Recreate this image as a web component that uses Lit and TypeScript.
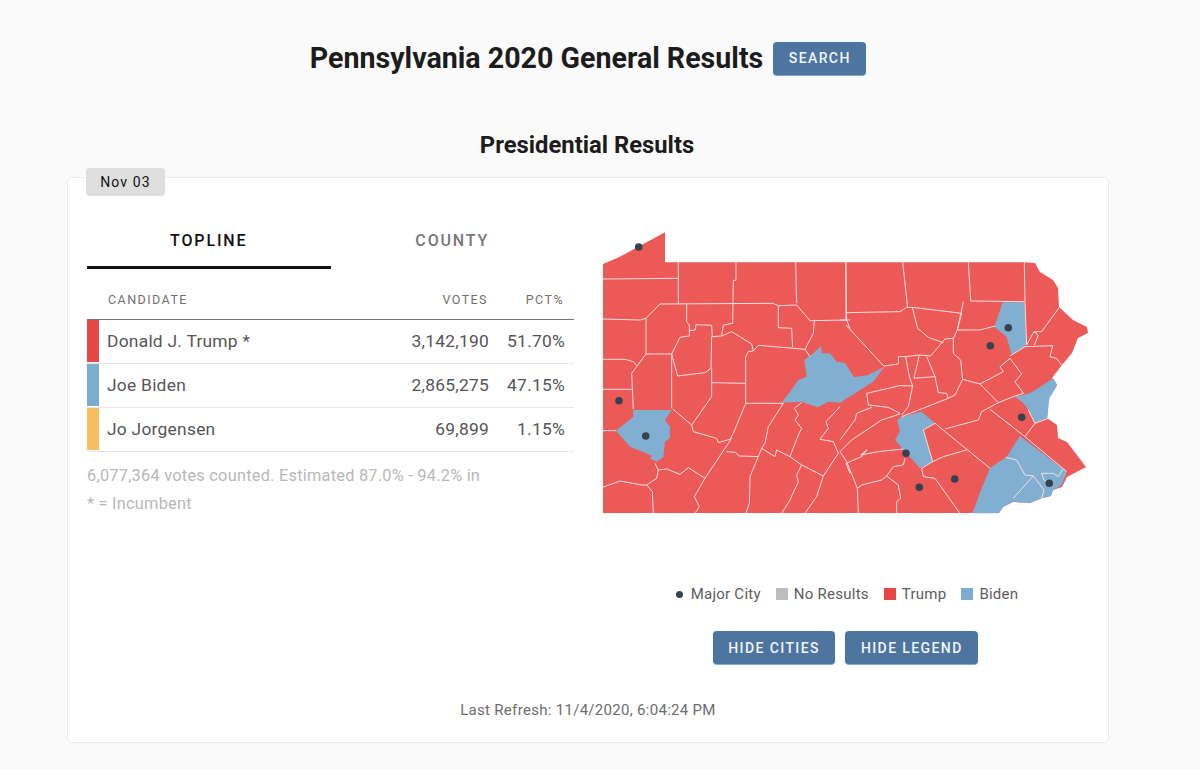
import { LitElement, html, css, svg } from "lit";
import { customElement } from "lit/decorators.js";

const OUTLINE = "M603 264L620 256.7L665 232.3V262.3H1025L1035 263L1040 272L1053 280L1058 288L1059 307L1073 320L1087 327L1088 333L1078 338L1072 353L1062 365L1052 378L1057 385L1048 400L1047 418L1057 425L1058 438L1067 442L1086 467L1067 477L1062 487L1053 490L1051 496L1042 498L1030 503L1013 502L1003 507L999 513H603Z";

const BLUE_A = [
  "130,570 245,570 225,600 240,620 240,655 225,665 220,712 200,725 178,715 188,708 120,680 78,632 130,590",
  "575,548 600,515 625,480 650,470 643,420 670,400 693,378 695,400 720,400 740,425 765,428 792,472 835,465 883,440 850,485 750,548 715,545 683,562 635,545",
];
const BLUE_B = [
  "488,157 553,157 560,285 515,315 500,260 463,230 472,205",
  "525,440 570,430 640,385 652,405 628,445 622,505 585,520 565,480 550,460",
  "185,500 245,485 285,520 250,540 278,635 240,655 200,610 165,570 180,545 172,510",
  "540,558 680,665 665,705 640,720 632,738 605,745 570,760 520,755 490,770 477,790 397,790 425,715 450,655 500,620",
];
const LINES_A = [
  "38,177 265,175", "265,127 265,250", "438,127 438,180 430,182 428,310 400,315 395,345", "617,127 620,250", "767,127 770,300 780,325",
  "38,297 150,300 168,295 210,252 548,250 565,257 620,255 660,302 780,300",
  "290,252 290,305 298,315 298,348 270,352 245,402 168,402 168,295", "168,402 125,460 130,568", "38,418 105,418 130,425 140,437",
  "38,508 125,508", "38,632 78,632", "565,257 565,323 605,325 608,382", "673,302 670,340 645,388 660,410", "505,376 645,388",
  "505,376 490,393 475,395 467,410 467,550", "490,393 485,372 425,335 395,348 367,350 365,316 318,314 316,330 298,332",
  "365,350 363,445 345,458 263,468 245,402 245,565", "365,445 365,530 305,615 248,567", "365,488 467,490", "467,550 580,550",
  "467,550 430,640 420,658 385,668 380,655 310,635 305,615",
  "425,655 345,775 295,743 270,763 230,747 205,750 195,730", "205,750 200,775 170,795 155,795 90,783 38,802", "170,795 187,815 190,880",
  "345,775 313,830 328,860 315,880", "410,695 435,697 448,708 505,710", "515,685 505,710 480,770 478,850 468,880",
  "515,685 555,710 560,690 600,710 625,645 635,625 615,600 625,585 613,565 635,548", "580,550 535,620 525,670 515,685",
  "600,710 635,735 700,768", "635,735 620,765 625,785 600,840 575,880", "700,768 680,830 645,880",
  "700,768 745,700 730,665 690,658 715,625 708,605 750,560",
];
const LINES_B = [
  "18,37 18,210 0,210", "18,188 180,185 200,172 217,172 365,190", "188,37 203,172", "385,37 392,153 553,155", "553,37 555,155 560,285",
  "370,155 352,240 420,240 465,228", "217,172 233,235 265,262 310,278", "365,190 352,240 340,265 315,267 272,318 238,315 197,320 175,320 175,342 133,348",
  "18,225 133,350", "340,265 340,310 362,330 368,388 420,402 490,365 480,350 510,325", "368,388 345,435 325,445 320,430 295,428 285,380 260,320",
  "238,315 222,385 285,380", "197,320 208,380 218,408 205,470 185,495", "80,430 180,407 218,408", "80,430 85,465 145,472 180,490", "325,445 185,500",
  "420,402 475,458 425,485 415,510 315,537", "475,458 520,440 550,430 525,395 545,372 510,325", "510,318 555,290 638,287 630,320 650,325 665,345",
  "560,285 582,245 605,245 658,172", "582,245 595,255 583,285", "450,478 555,560", "555,560 585,520 565,480", "625,505 585,520",
  "555,560 680,665", "250,540 285,520 450,655", "250,540 278,635 310,620 380,600", "245,655 278,635", "245,655 250,680 285,685 360,790",
  "140,678 175,705 182,745 170,755 170,790", "140,678 125,690 65,705 52,715 55,790", "140,678 160,650 190,645 195,625",
  "18,640 65,620 80,600 62,615 115,605 190,597", "0,605 35,570 125,510 180,492", "0,570 45,510 50,490 95,472", "0,605 20,635 52,715", "18,640 30,670",
  "497,622 530,630 555,675 580,678 520,745", "580,678 612,720 605,745", "605,670 640,670 655,680 668,658", "605,670 612,690 630,700",
];
const CITIES: [number, number][] = [[638.7, 247], [619, 400.7], [645.7, 436], [1008.3, 327.7], [990.3, 345.7], [1021.7, 417.3], [906, 453.3], [954.7, 479], [919.3, 487.3], [1049.3, 483.3]];

const rows = [
  { name: "Donald J. Trump *", votes: "3,142,190", pct: "51.70%", color: "#e84545" },
  { name: "Joe Biden", votes: "2,865,275", pct: "47.15%", color: "#7cadd0" },
  { name: "Jo Jorgensen", votes: "69,899", pct: "1.15%", color: "#f7bd60" },
];
const legend = [
  { label: "No Results", cls: "none" },
  { label: "Trump", cls: "trump" },
  { label: "Biden", cls: "biden" },
];

@customElement("app-root")
export class AppRoot extends LitElement {
  static styles = css`
    :host { display: block; min-height: 769px; background: #fafafa; font-family: Roboto, "Liberation Sans", sans-serif; overflow: hidden; }
    .page { width: 1176px; height: 769px; box-sizing: border-box; padding-top: 41px; display: flex; flex-direction: column; align-items: center; }
    .head { display: flex; align-items: center; gap: 10px; height: 34px; }
    h1 { margin: 0; font-size: 28.6px; font-weight: 700; color: #1c1c1c; white-space: nowrap; }
    .btn { background: #4e74a0; color: #f2f5f9; border: none; border-radius: 4px; font: 500 14px Roboto, sans-serif; letter-spacing: 1.4px; height: 33px; padding: 0 15.5px; box-shadow: 0 1px 0 #7fa6d0; white-space: nowrap; }
    h2 { margin: 56px 2px 0 0; font-size: 23.8px; line-height: 29px; font-weight: 700; color: #1c1c1c; }
    .card { position: relative; margin-top: 17px; width: 1042px; height: 566px; box-sizing: border-box; background: #fff; border: 1px solid #ebebeb; border-radius: 5px; padding: 42px 19px 0; display: flex; flex-direction: column; }
    .tag { position: absolute; left: 18px; top: -10px; width: 79px; height: 28px; background: #dedede; border-radius: 4px; font-size: 14px; letter-spacing: 1.1px; color: #111; display: flex; align-items: center; justify-content: center; }
    .body { display: flex; flex: 1; }
    .left { width: 487px; }
    .tabs { display: flex; height: 49px; }
    .tab { width: 245.5px; box-sizing: border-box; font-size: 16px; font-weight: 500; letter-spacing: 1.85px; color: #777; text-align: center; padding-top: 11px; }
    .tab.on { color: #111; border-bottom: 3px solid #111; }
    .thead, .row { display: grid; grid-template-columns: 12px 1fr 110px 76px; align-items: center; }
    .thead { height: 51px; padding-top: 10px; font-size: 12.5px; letter-spacing: 1.45px; color: #6f6f6f; border-bottom: 1px solid #777; box-sizing: border-box; }
    .thead .name { padding-left: 9px; }
    .num { text-align: right; padding-right: 9px; }
    .thead .num { padding-right: 10px; }
    .row { height: 44px; padding-bottom: 1px; box-sizing: border-box; font-size: 17.4px; letter-spacing: 0.25px; color: #555; border-bottom: 1px solid #e8e8e8; }
    .row .name { padding-left: 8px; }
    .swatch { height: 42px; align-self: start; }
    .note { margin-top: 10px; font-size: 16.4px; line-height: 28px; color: #b8b8b8; letter-spacing: 0.22px; }
    .right { width: 487px; margin-left: 28px; display: flex; flex-direction: column; align-items: center; }
    .map { width: 510px; height: 310px; display: block; flex: none; margin-left: -2px; }
    .legend { display: flex; align-items: center; margin: 54px 0 0 3px; font-size: 15px; letter-spacing: 0.25px; color: #5c5c5c; height: 20px; }
    .item { display: flex; align-items: center; margin-right: 15px; }
    .item:last-child { margin-right: 0; }
    .dot { width: 7px; height: 7px; border-radius: 50%; background: #37424f; margin-right: 8px; }
    .sq { width: 12px; height: 12px; margin-right: 6px; }
    .none { background: #bdbdbd; } .trump { background: #e84545; } .biden { background: #7cadd0; }
    .actions { display: flex; gap: 10px; margin-top: 27px; }
    .refresh { text-align: center; font-size: 15px; color: #6c6c6c; letter-spacing: 0.3px; margin-bottom: 23px; line-height: 17px; }
  `;

  render() {
    return html`<div class="page">
      <div class="head"><h1>Pennsylvania 2020 General Results</h1><button class="btn">SEARCH</button></div>
      <h2>Presidential Results</h2>
      <div class="card">
        <div class="tag">Nov 03</div>
        <div class="body">
          <div class="left">
            <div class="tabs"><div class="tab on">TOPLINE</div><div class="tab">COUNTY</div></div>
            <div class="thead"><span></span><span class="name">CANDIDATE</span><span class="num">VOTES</span><span class="num">PCT%</span></div>
            ${rows.map((r) => html`<div class="row"><div class="swatch" style="background:${r.color}"></div><span class="name">${r.name}</span><span class="num">${r.votes}</span><span class="num">${r.pct}</span></div>`)}
            <div class="note">6,077,364 votes counted. Estimated 87.0% - 94.2% in<br />* = Incumbent</div>
          </div>
          <div class="right">
            <svg class="map" viewBox="590 220 510 310">
              <path d=${OUTLINE} fill="#ec5a58"></path>
              <g transform="translate(590 220) scale(.3333)" fill="#81afd1">${BLUE_A.map((p) => svg`<polygon points=${p}></polygon>`)}</g>
              <g transform="translate(840 250) scale(.3333)" fill="#81afd1">${BLUE_B.map((p) => svg`<polygon points=${p}></polygon>`)}</g>
              <g transform="translate(590 220) scale(.3333)" fill="none" stroke="#fbdedd" stroke-width="3">${LINES_A.map((p) => svg`<polyline points=${p}></polyline>`)}</g>
              <g transform="translate(840 250) scale(.3333)" fill="none" stroke="#fbdedd" stroke-width="3">${LINES_B.map((p) => svg`<polyline points=${p}></polyline>`)}</g>
              ${CITIES.map(([x, y]) => svg`<circle cx=${x} cy=${y} r="3.8" fill="#37424f"></circle>`)}
            </svg>
            <div class="legend">
              <div class="item"><span class="dot"></span>Major City</div>
              ${legend.map((l) => html`<div class="item"><span class="sq ${l.cls}"></span>${l.label}</div>`)}
            </div>
            <div class="actions"><button class="btn">HIDE CITIES</button><button class="btn">HIDE LEGEND</button></div>
          </div>
        </div>
        <div class="refresh">Last Refresh: 11/4/2020, 6:04:24 PM</div>
      </div>
    </div>`;
  }
}
